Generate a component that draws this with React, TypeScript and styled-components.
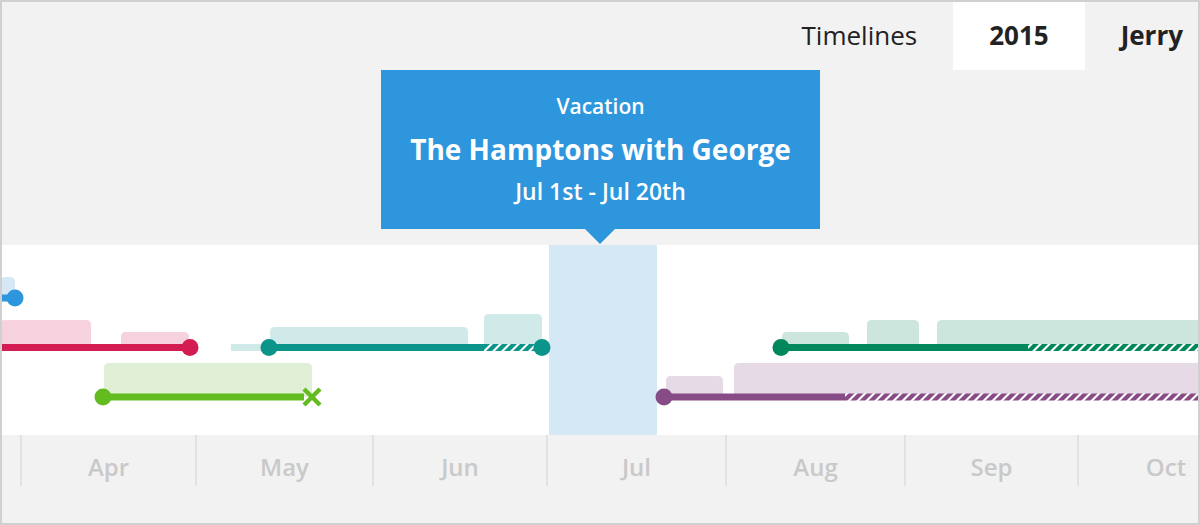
import styled, { createGlobalStyle } from 'styled-components';

const colors = {
	frame: '#d0d0d0',
	page: '#f2f2f2',
	text: '#222222',
	blue: '#2d96dc',
	highlight: '#d5e8f6',
	tick: '#e2e2e2',
	month: '#c9c9c9'
};

type Block = [number, number, number];

type Track = {
	key: string;
	color: string;
	light: string;
	y: number;
	from: number;
	to: number;
	hatchFrom?: number;
	lead?: [number, number];
	startDot?: boolean;
	end?: 'dot' | 'cross';
	blocks: Block[];
};

const tracks: Track[] = [
	{ key: 'blue', color: '#2d96dc', light: '#d6e8f6', y: 298, from: 0, to: 15, end: 'dot', blocks: [[0, 15, 277]] },
	{
		key: 'red',
		color: '#d31d52',
		light: '#f5d2de',
		y: 347.5,
		from: 0,
		to: 190,
		end: 'dot',
		blocks: [
			[0, 91, 320],
			[121, 189, 332]
		]
	},
	{
		key: 'teal',
		color: '#0b958a',
		light: '#d0eaea',
		y: 347.5,
		from: 269,
		to: 542,
		hatchFrom: 484,
		lead: [231, 269],
		startDot: true,
		end: 'dot',
		blocks: [
			[270, 468, 327],
			[484, 542, 314]
		]
	},
	{
		key: 'lime',
		color: '#63bc1f',
		light: '#e1efd6',
		y: 397,
		from: 103,
		to: 304,
		startDot: true,
		end: 'cross',
		blocks: [[104, 312, 363]]
	},
	{
		key: 'green',
		color: '#00885c',
		light: '#cde6dd',
		y: 347.5,
		from: 781,
		to: 1200,
		hatchFrom: 1028,
		startDot: true,
		blocks: [
			[782, 849, 332],
			[867, 919, 320],
			[937, 1210, 320]
		]
	},
	{
		key: 'purple',
		color: '#874b86',
		light: '#e5dae6',
		y: 397,
		from: 664,
		to: 1200,
		hatchFrom: 845,
		startDot: true,
		blocks: [
			[666, 723, 376],
			[734, 1210, 363]
		]
	}
];

const months = [
	{ name: 'Apr', width: 175 },
	{ name: 'May', width: 177 },
	{ name: 'Jun', width: 174 },
	{ name: 'Jul', width: 179 },
	{ name: 'Aug', width: 179 },
	{ name: 'Sep', width: 173 },
	{ name: 'Oct', width: 176 }
];

const GlobalStyle = createGlobalStyle`
	body {
		margin: 0;
		background: #ffffff;
		font-family: 'Open Sans', 'Noto Sans', sans-serif;
	}
`;

const Frame = styled.div`
	width: 1200px;
	height: 525px;
	box-sizing: border-box;
	border: 2px solid ${colors.frame};
	background-color: ${colors.page};
	overflow: hidden;
	display: flex;
	flex-direction: column;
`;

const Header = styled.div`
	position: relative;
	height: 243px;
	flex-shrink: 0;
`;

const Nav = styled.nav`
	display: flex;
	justify-content: flex-end;
	height: 68px;
	margin-right: -21px;
`;

const Tab = styled.div<{ $active?: boolean; $bold?: boolean }>`
	display: flex;
	align-items: center;
	padding: 0 36px 3px;
	font-size: 26px;
	color: ${colors.text};
	font-weight: ${(p) => (p.$bold ? 700 : 400)};
	background-color: ${(p) => (p.$active ? '#ffffff' : 'transparent')};
`;

const Tooltip = styled.div`
	position: absolute;
	left: 379px;
	top: 68px;
	width: 439px;
	height: 159px;
	box-sizing: border-box;
	background-color: ${colors.blue};
	color: #ffffff;
	display: flex;
	flex-direction: column;
	align-items: center;
	padding-top: 21px;
	&::after {
		content: '';
		position: absolute;
		left: 204px;
		bottom: -15px;
		border-left: 15px solid transparent;
		border-right: 15px solid transparent;
		border-top: 15px solid ${colors.blue};
	}
`;

const Category = styled.div`
	font-size: 21px;
	font-weight: 600;
	line-height: 30px;
`;

const Title = styled.div`
	font-size: 28px;
	font-weight: 700;
	line-height: 40px;
	margin-top: 8px;
`;

const Dates = styled.div`
	font-size: 23px;
	font-weight: 600;
	line-height: 30px;
	margin-top: 7px;
`;

const Chart = styled.div`
	height: 190px;
	flex-shrink: 0;
	background-color: #ffffff;
	svg {
		display: block;
	}
`;

const Axis = styled.div`
	display: flex;
	padding-left: 18px;
`;

const MonthCell = styled.div<{ $width: number }>`
	flex: 0 0 ${(p) => p.$width}px;
	box-sizing: border-box;
	height: 51px;
	border-left: 2px solid ${colors.tick};
	display: flex;
	justify-content: center;
	padding-top: 12px;
	font-size: 24px;
	font-weight: 600;
	line-height: 40px;
	color: ${colors.month};
`;

const blockPath = ([x1, x2, top]: Block, bottom: number) => {
	const r = 5;
	return `M${x1} ${bottom} V${top + r} Q${x1} ${top} ${x1 + r} ${top} H${x2 - r} Q${x2} ${top} ${x2} ${top + r} V${bottom} Z`;
};

const Timeline = () => {
	return (
		<svg width={1196} height={190} viewBox="2 245 1196 190">
			<defs>
				{tracks
					.filter((t) => t.hatchFrom !== undefined)
					.map((t) => (
						<pattern
							key={t.key}
							id={`hatch-${t.key}`}
							patternUnits="userSpaceOnUse"
							width={9}
							height={10}
							patternTransform="skewX(-45)"
						>
							<rect x={0} y={0} width={9} height={10} fill="#ffffff" />
							<rect x={0} y={0} width={6} height={10} fill={t.color} />
						</pattern>
					))}
			</defs>
			<rect x={549} y={245} width={108} height={190} fill={colors.highlight} />
			{tracks.map((t) => {
				const half = 3.5;
				const solidEnd = t.hatchFrom ?? t.to;
				return (
					<g key={t.key}>
						{t.blocks.map((b, i) => (
							<path key={i} d={blockPath(b, t.y)} fill={t.light} />
						))}
						{t.lead && (
							<rect x={t.lead[0]} y={t.y - half} width={t.lead[1] - t.lead[0]} height={half * 2} fill={t.light} />
						)}
						<rect x={t.from} y={t.y - half} width={solidEnd - t.from} height={half * 2} fill={t.color} />
						{t.hatchFrom !== undefined && (
							<rect
								x={t.hatchFrom}
								y={t.y - half}
								width={t.to - t.hatchFrom}
								height={half * 2}
								fill={`url(#hatch-${t.key})`}
							/>
						)}
						{t.startDot && <circle cx={t.from} cy={t.y} r={8.5} fill={t.color} />}
						{t.end === 'dot' && <circle cx={t.to} cy={t.y} r={8.5} fill={t.color} />}
						{t.end === 'cross' && (
							<g stroke={t.color} strokeWidth={4.5}>
								<line x1={304} y1={t.y - 8} x2={320} y2={t.y + 8} />
								<line x1={304} y1={t.y + 8} x2={320} y2={t.y - 8} />
							</g>
						)}
					</g>
				);
			})}
		</svg>
	);
};

const App = () => {
	return (
		<>
			<GlobalStyle />
			<Frame>
				<Header>
					<Nav>
						<Tab>Timelines</Tab>
						<Tab $active $bold>
							2015
						</Tab>
						<Tab $bold>Jerry</Tab>
					</Nav>
					<Tooltip>
						<Category>Vacation</Category>
						<Title>The Hamptons with George</Title>
						<Dates>Jul 1st - Jul 20th</Dates>
					</Tooltip>
				</Header>
				<Chart>
					<Timeline />
				</Chart>
				<Axis>
					{months.map((m) => (
						<MonthCell key={m.name} $width={m.width}>
							{m.name}
						</MonthCell>
					))}
				</Axis>
			</Frame>
		</>
	);
};

export default App;
